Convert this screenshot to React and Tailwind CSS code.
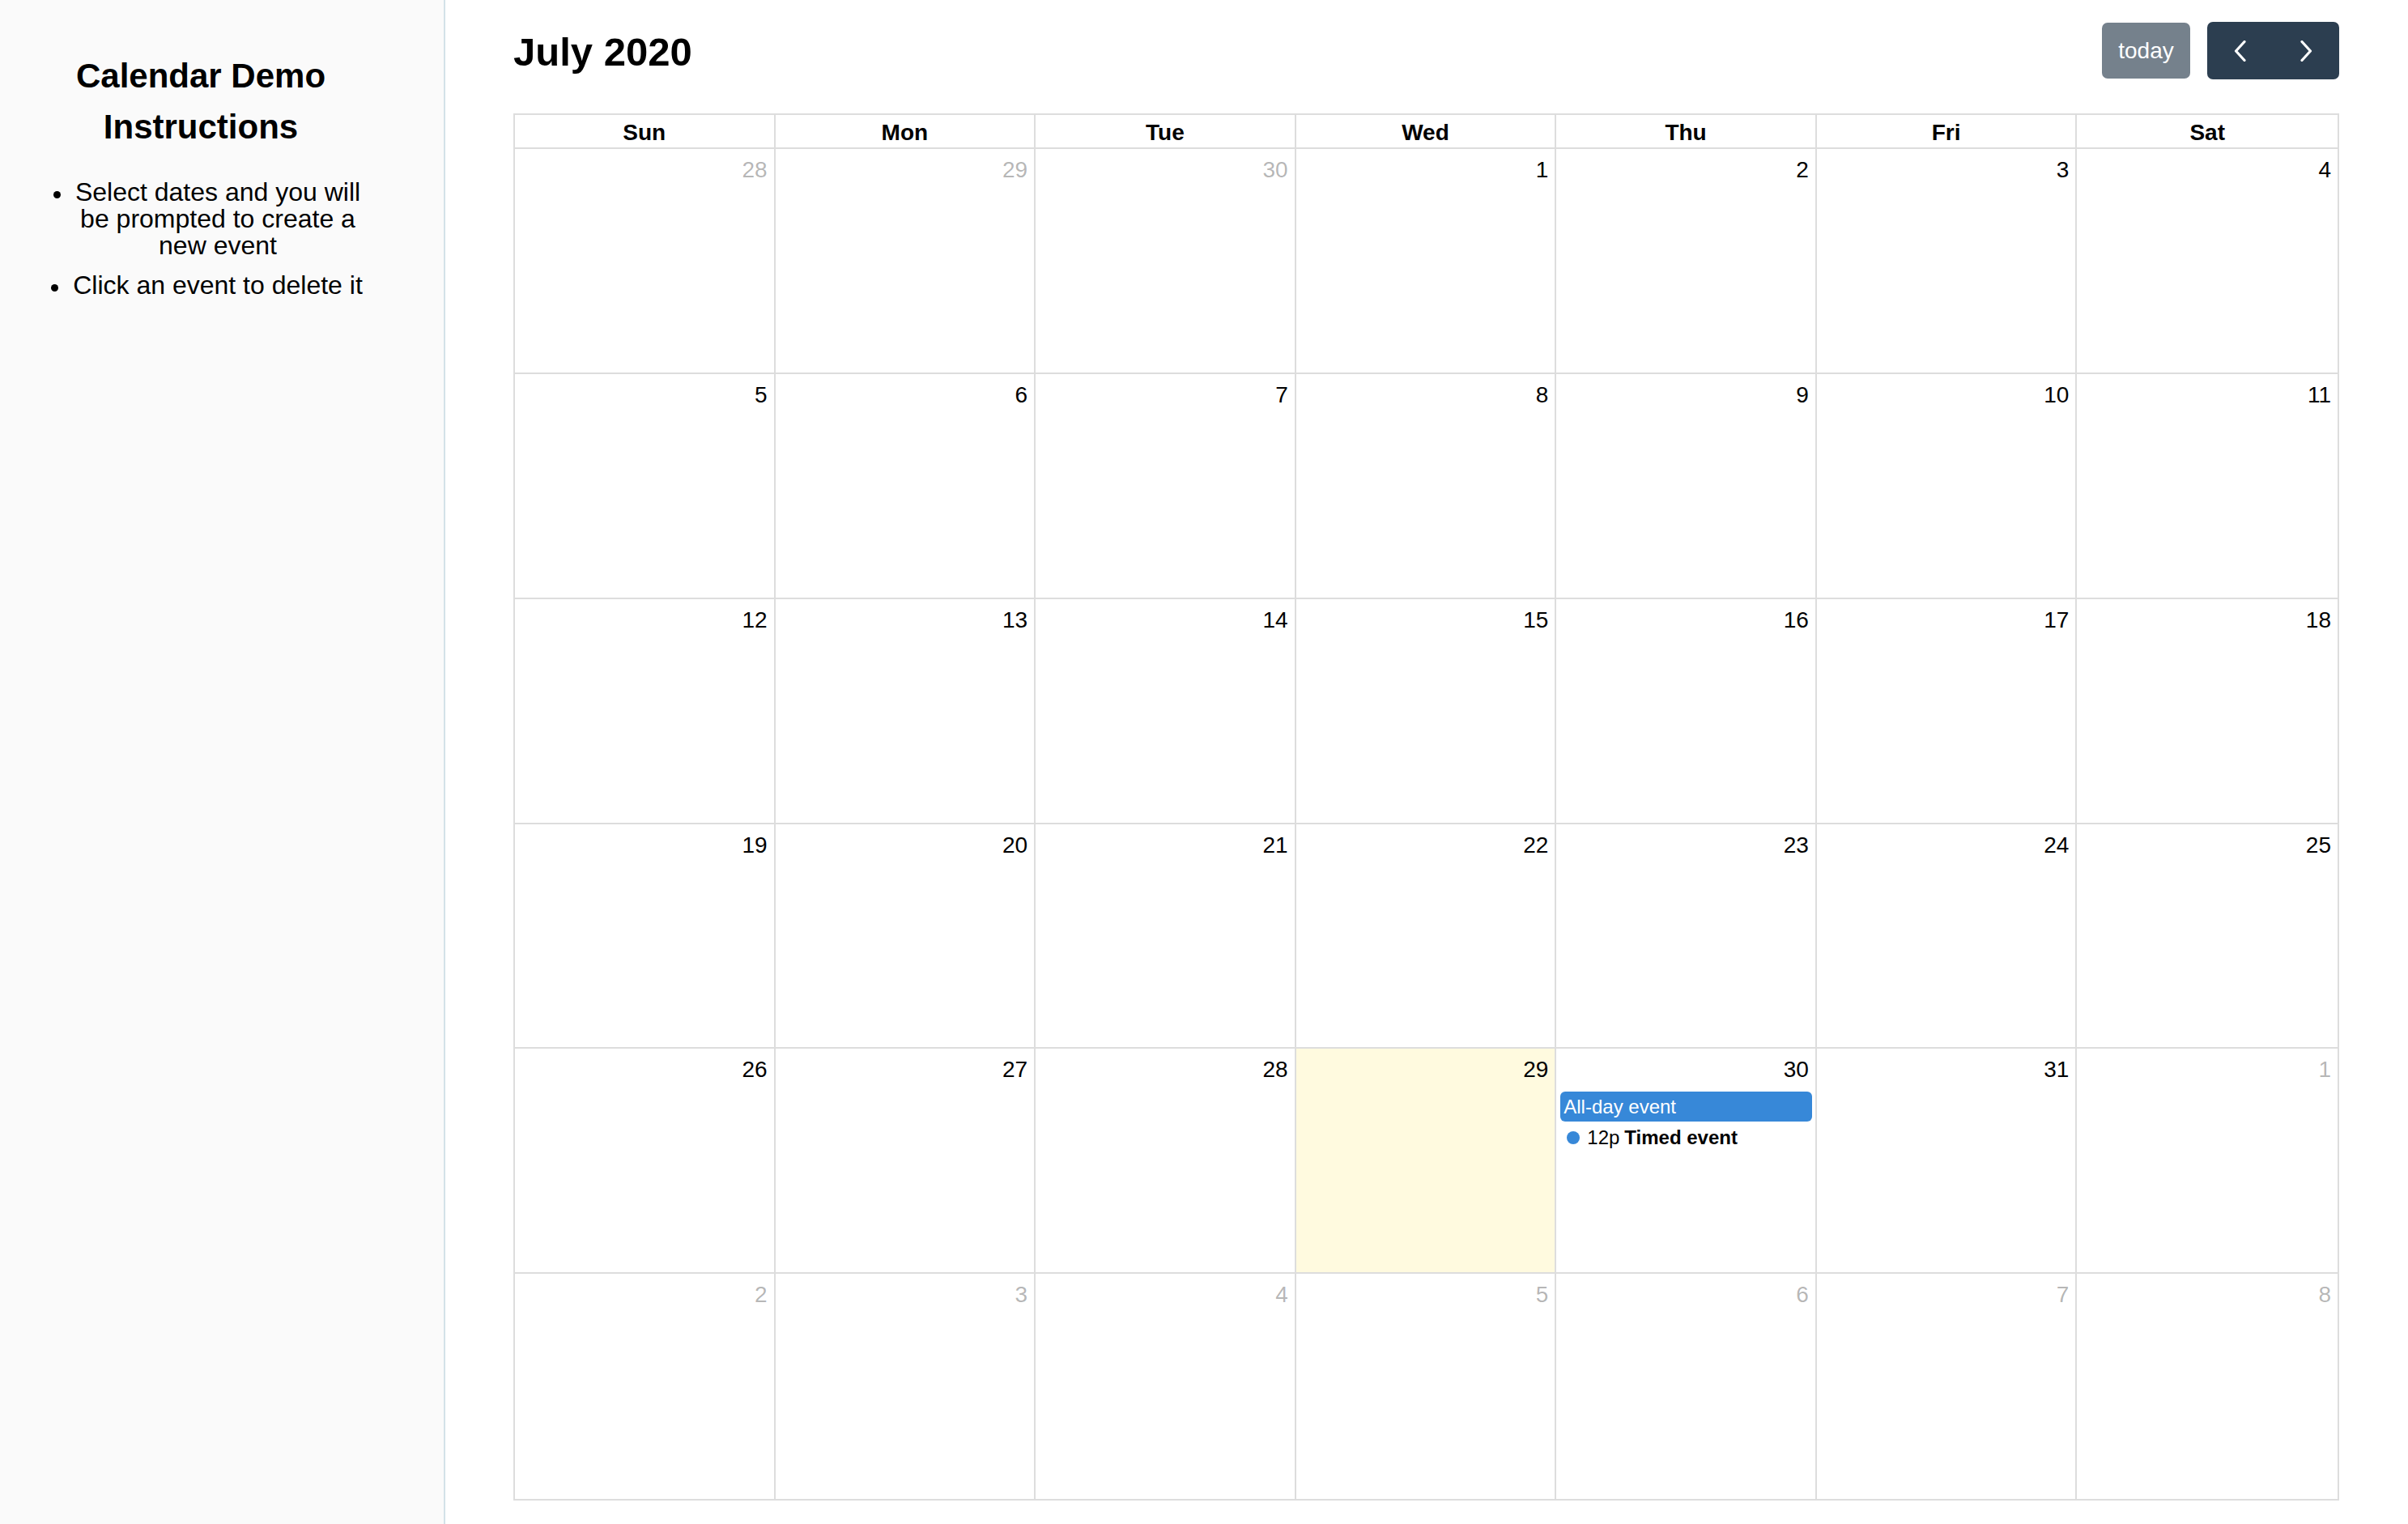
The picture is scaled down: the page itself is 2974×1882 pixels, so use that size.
import React from "react";

const days = [];
[28, 29, 30].forEach((d) => days.push({ d, other: true }));
for (let i = 1; i <= 31; i++) days.push({ d: i, other: false });
for (let i = 1; i <= 8; i++) days.push({ d: i, other: true });

const dows = ["Sun", "Mon", "Tue", "Wed", "Thu", "Fri", "Sat"];

function Chevron({ dir }) {
  return (
    <svg width="16" height="26" viewBox="0 0 16 26" fill="none">
      {dir === "left" ? (
        <path d="M13 1.5 L2.5 13 L13 24.5" stroke="white" strokeWidth="3.2" strokeLinecap="round" strokeLinejoin="round" />
      ) : (
        <path d="M3 1.5 L13.5 13 L3 24.5" stroke="white" strokeWidth="3.2" strokeLinecap="round" strokeLinejoin="round" />
      )}
    </svg>
  );
}

function Bullet() {
  return <span className="inline-block w-[9px] h-[9px] rounded-full bg-black ml-[-27px] mr-[18px] mb-[3px]"></span>;
}

export default function App() {
  return (
    <div className="flex min-h-screen bg-white text-black font-['Liberation_Sans',Arial,Helvetica,sans-serif]">
      <aside className="w-[550px] shrink-0 bg-[#fafafa] border-r-2 border-[#d3e2e8]">
        <div className="ml-[37px] w-[422px] pt-[62px]">
          <h2 className="text-center text-[42px] font-bold leading-[63px]">
            Calendar Demo
            <br />
            Instructions
          </h2>
          <ul className="mt-[33px] pl-[42px] list-none text-center text-[32px] leading-[33px]">
            <li className="mb-[16px]">
              <Bullet />
              Select dates and you will be prompted to create a new event
            </li>
            <li>
              <Bullet />
              Click an event to delete it
            </li>
          </ul>
        </div>
      </aside>
      <main className="flex-1 pl-[84px] pr-[85px] pt-[27px]">
        <div className="flex items-center justify-between h-[71px]">
          <h1 className="pt-[2px] text-[49px] font-bold leading-[56px]">July 2020</h1>
          <div className="flex items-center gap-[21px]">
            <button className="w-[109px] h-[69px] rounded-[7px] bg-[#2c3e50] opacity-65 text-white text-[28px] leading-[32px] flex items-center justify-center">
              today
            </button>
            <div className="flex h-[71px] rounded-[7px] bg-[#2c3e50] overflow-hidden">
              <button className="w-[81px] h-full flex items-center justify-center">
                <Chevron dir="left" />
              </button>
              <button className="w-[82px] h-full flex items-center justify-center">
                <Chevron dir="right" />
              </button>
            </div>
          </div>
        </div>
        <div className="mt-[42px] border-2 border-[#dddddd]">
          <div className="grid grid-cols-7 border-b-2 border-[#dddddd]">
            {dows.map((d, i) => (
              <div
                key={d}
                className={`text-center font-bold text-[28px] leading-[32px] pt-[6px] pb-[2px] ${i < 6 ? "border-r-2 border-[#dddddd]" : ""}`}
              >
                {d}
              </div>
            ))}
          </div>
          <div className="grid grid-cols-7 grid-rows-6 h-[1667px]">
            {days.map((day, idx) => {
              const col = idx % 7;
              const row = Math.floor(idx / 7);
              const isToday = !day.other && day.d === 29;
              const hasEvents = !day.other && day.d === 30;
              return (
                <div
                  key={idx}
                  className={`flex flex-col ${col < 6 ? "border-r-2" : ""} ${row < 5 ? "border-b-2" : ""} border-[#dddddd] ${isToday ? "bg-[#fffadf]" : ""}`}
                >
                  <div className={`text-right text-[28px] leading-[36px] pt-[8px] pr-[8px] ${day.other ? "text-black/30" : ""}`}>
                    {day.d}
                  </div>
                  {hasEvents && (
                    <div className="mt-[9px] pl-[5px] pr-[4px]">
                      <div className="h-[37px] rounded-[6px] bg-[#3788d8] text-white text-[24px] leading-[37px] pl-[4px] whitespace-nowrap overflow-hidden">
                        All-day event
                      </div>
                      <div className="mt-[2px] flex items-center py-[4px] text-[24px] leading-[28px] whitespace-nowrap">
                        <span className="ml-[8px] mr-[9px] w-[16px] h-[16px] rounded-full bg-[#3788d8]"></span>
                        <span className="mr-[6px]">12p</span>
                        <span className="font-bold">Timed event</span>
                      </div>
                    </div>
                  )}
                </div>
              );
            })}
          </div>
        </div>
      </main>
    </div>
  );
}
